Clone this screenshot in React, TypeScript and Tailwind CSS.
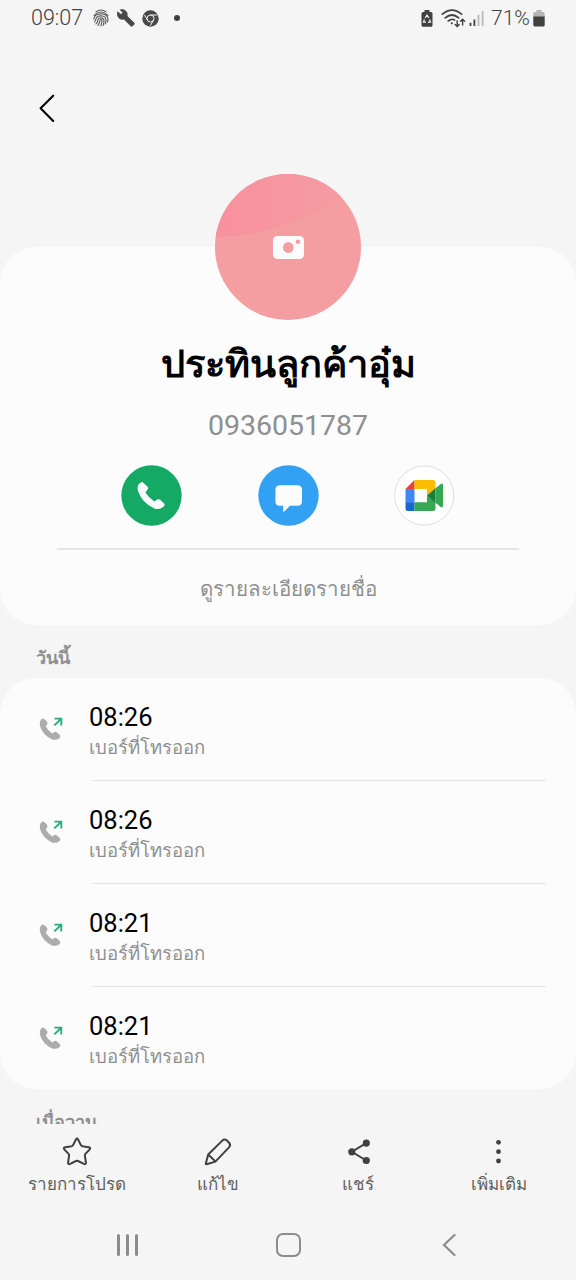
interface Call {
  id: number;
  time: string;
  label: string;
}

interface ToolbarItem {
  title: string;
  icon: React.ReactNode;
}

const calls: Call[] = [
  { id: 1, time: "08:26", label: "เบอร์ที่โทรออก" },
  { id: 2, time: "08:26", label: "เบอร์ที่โทรออก" },
  { id: 3, time: "08:21", label: "เบอร์ที่โทรออก" },
  { id: 4, time: "08:21", label: "เบอร์ที่โทรออก" },
];

const toolbar: ToolbarItem[] = [
  { title: "รายการโปรด", icon: <StarIcon /> },
  { title: "แก้ไข", icon: <PencilIcon /> },
  { title: "แชร์", icon: <ShareIcon /> },
  { title: "เพิ่มเติม", icon: <MoreIcon /> },
];

function StarIcon() {
  return (
    <svg width="32" height="32" viewBox="0 0 32 32" fill="none" stroke="#404040" strokeWidth="2" strokeLinejoin="round">
      <path d="M14.9 3.5Q16 1.7 17.1 3.5L19.9 9.1Q20.4 10 21.4 10.2L27.7 11.2Q30.2 11.8 28.5 13.6L24.4 17.9Q23.8 18.6 23.9 19.6L24.9 26.5Q25 28.8 22.9 27.9L17 25Q16 24.5 15 25L9.1 27.9Q7 28.8 7.1 26.5L8.1 19.6Q8.2 18.6 7.6 17.9L3.5 13.6Q1.8 11.8 4.3 11.2L10.6 10.2Q11.6 10 12.1 9.1Z" />
    </svg>
  );
}

function PencilIcon() {
  return (
    <svg width="32" height="32" viewBox="0 0 32 32" fill="none" stroke="#404040" strokeWidth="2" strokeLinejoin="round">
      <path d="M6.2 18.5L20.3 4.6Q22.5 2.6 24.8 4.4L27.3 7Q29.1 9.2 27 11.4L13.4 25.6L4.6 28.2Q3.6 28.4 3.8 27.4Z" />
      <path d="M6.2 18.5L13.6 25.6" />
    </svg>
  );
}

function ShareIcon() {
  return (
    <svg width="32" height="32" viewBox="0 0 32 32" fill="#404040" stroke="#404040">
      <path d="M24.3 7.1L9.8 15.8L24.3 24.5" fill="none" strokeWidth="1.9" />
      <circle cx="24.3" cy="7.1" r="3.6" stroke="none" />
      <circle cx="9.8" cy="15.8" r="3.6" stroke="none" />
      <circle cx="24.3" cy="24.5" r="3.6" stroke="none" />
    </svg>
  );
}

function MoreIcon() {
  return (
    <svg width="32" height="32" viewBox="0 0 32 32" fill="#404040">
      <circle cx="15.5" cy="6.3" r="2.4" />
      <circle cx="15.5" cy="15.7" r="2.4" />
      <circle cx="15.5" cy="25" r="2.4" />
    </svg>
  );
}

function FingerprintIcon() {
  return (
    <svg width="16" height="18" viewBox="0 0 16 18" fill="none" stroke="#555" strokeWidth="1.1" strokeLinecap="round">
      <path d="M3 2.9Q8 -.8 13 2.9M1 6.4Q8 -.4 15 6.4" />
      <path d="M.9 10.3Q1.2 5 8 4.8Q14.8 5 15 10.5Q15 12 14.4 13" />
      <path d="M1.6 13Q2.8 11.5 3 9.8Q3.8 6.8 8 6.8Q12.8 7 13 11Q12.9 13.5 12.4 15" />
      <path d="M3 15Q5 12.5 5 10.5Q5.4 8.8 8 8.8Q10.8 9 11 11.5Q11 14.2 10.2 16.4" />
      <path d="M5 16.5Q7 13.5 7 11Q8 10 9 11.2Q9 14.5 7.8 17" />
    </svg>
  );
}

function WrenchIcon() {
  return (
    <svg width="18" height="18" viewBox="0 0 18 18" fill="#484848" stroke="#484848" strokeWidth="0.8" strokeLinejoin="round">
      <path d="M.8 2.8L3.9 5.6L5.9 3.6L3.2 .8Q6.4 -.2 8.8 2Q10.9 4.3 10 7L17 13.8Q17.6 14.6 17 15.4L15.3 17.1Q14.6 17.7 13.8 17L6.9 10.1Q3.8 11 1.7 8.8Q-.3 6.2 .8 2.8Z" />
    </svg>
  );
}

function ChromeIcon() {
  return (
    <svg width="17" height="17" viewBox="0 0 17 17" fill="none">
      <circle cx="8.5" cy="8.5" r="8.2" fill="#484848" />
      <circle cx="8.5" cy="8.5" r="3.5" stroke="#f5f5f5" strokeWidth="1" />
      <path d="M8.5 5H15.2M5.4 10.1L2.4 4.9M11.5 10.1L8.4 15.6" stroke="#f5f5f5" strokeWidth="1" />
    </svg>
  );
}

function BatterySaverIcon() {
  return (
    <svg width="12" height="17" viewBox="0 0 12 17">
      <path d="M3.5 0H8.5V2H10Q11.5 2 11.5 3.5V15.2Q11.5 16.7 10 16.7H2Q.5 16.7 .5 15.2V3.5Q.5 2 2 2H3.5Z" fill="#404040" />
      <path d="M4.1 8L6 5.1L7.9 8M8.6 9.4L9.5 12.2H7M5 12.2H2.5L3.4 9.4" fill="none" stroke="#f5f5f5" strokeWidth="1.2" />
    </svg>
  );
}

function WifiIcon() {
  return (
    <svg width="25" height="19" viewBox="0 0 25 19" fill="none" stroke="#404040" strokeLinecap="round">
      <path d="M1.3 5.2Q11 -2.9 20.6 5.2" strokeWidth="1.7" />
      <path d="M4.2 8.9Q11 3.1 17.7 8.9" strokeWidth="1.7" />
      <path d="M7.2 12Q11 9 13.6 11" strokeWidth="1.6" />
      <circle cx="10.8" cy="14.3" r="1.1" fill="#404040" stroke="none" />
      <path d="M16.2 11.8V17M14.2 15.4L16.2 17.4L18.2 15.4M21.6 16V10.5M19.6 12.3L21.6 10.3L23.6 12.3" strokeWidth="1.4" />
    </svg>
  );
}

function SignalIcon() {
  return (
    <svg width="16" height="17" viewBox="0 0 16 17">
      <path d="M.6 12.8H2.4V16H.6ZM4.5 9.4H6.3V16H4.5Z" fill="#404040" />
      <path d="M8.6 4.8H10.4V16H8.6ZM12.7 1H14.5V16H12.7Z" fill="#b9b9b9" />
    </svg>
  );
}

function BatteryIcon() {
  return (
    <svg width="12" height="17" viewBox="0 0 12 17">
      <path d="M3.5 0H8.5V2H10Q11.7 2 11.7 3.7V7H.3V3.7Q.3 2 2 2H3.5Z" fill="#b5b5b5" />
      <path d="M.3 6.5H11.7V15Q11.7 16.6 10 16.6H2Q.3 16.6 .3 15Z" fill="#404040" />
    </svg>
  );
}

function StatusBar() {
  return (
    <div className="flex h-9 shrink-0 items-center pl-[31px] pr-[31px] text-[#404040]">
      <span className="w-[62px] whitespace-nowrap text-[21.5px] font-light leading-9">09:07</span>
      <FingerprintIcon />
      <span className="ml-2">
        <WrenchIcon />
      </span>
      <span className="ml-[7px]">
        <ChromeIcon />
      </span>
      <span className="ml-[15px] size-[6px] rounded-full bg-[#404040]" />
      <div className="ml-auto flex items-center">
        <BatterySaverIcon />
        <span className="ml-2">
          <WifiIcon />
        </span>
        <span className="ml-[3px]">
          <SignalIcon />
        </span>
        <span className="ml-[6px] w-[42px] whitespace-nowrap text-[21px] font-light leading-9">71%</span>
        <BatteryIcon />
      </div>
    </div>
  );
}

function Avatar() {
  return (
    <svg className="-mt-[73px] shrink-0" width="146" height="146" viewBox="0 0 146 146">
      <defs>
        <clipPath id="avatar">
          <circle cx="73" cy="73" r="73" />
        </clipPath>
        <linearGradient id="shade" x1="0" x2="1" y1="0" y2="0">
          <stop offset="0.1" stopColor="#f8919e" />
          <stop offset="0.9" stopColor="#f59ba1" />
        </linearGradient>
      </defs>
      <g clipPath="url(#avatar)">
        <rect width="146" height="146" fill="#f49ea2" />
        <path d="M0 63.5Q72 60 130 22V0H0Z" fill="url(#shade)" />
      </g>
      <rect x="58" y="62" width="31" height="23" rx="4.5" fill="#fcfcfc" />
      <circle cx="73.3" cy="73.5" r="5.4" fill="#f49ea2" />
      <circle cx="83" cy="67.8" r="2.2" fill="#f49ea2" />
    </svg>
  );
}

function ContactActions() {
  return (
    <div className="mt-[19px] flex gap-[75.5px]">
      <button className="size-[61px]">
        <svg width="61" height="61" viewBox="0 0 61 61">
          <circle cx="30.5" cy="30.5" r="30.2" fill="#15a966" />
          <path d="M17.4 19.6Q19.6 16.8 21.4 17L26.4 21.4Q27.8 23 26.6 24.6L24.4 27.4Q27.5 32.6 33.4 36.6L36 34.6Q37.6 33.6 39.2 34.8L43.1 38.4Q44.3 39.8 42.8 41.4Q38.5 45.2 33.4 43.4Q20.6 37.6 16.8 25.4Q16.1 22 17.4 19.6Z" fill="#fcfcfc" />
        </svg>
      </button>
      <button className="size-[61px]">
        <svg width="61" height="61" viewBox="0 0 61 61">
          <circle cx="30.5" cy="30.5" r="30.2" fill="#32a1f3" />
          <path d="M22 20.3H39.5Q44 20.3 44 24.8V36.3Q44 40.8 39.5 40.8H32L26.3 46.5Q25.2 47.4 25.2 46V40.8H22Q17.4 40.8 17.4 36.3V24.8Q17.4 20.3 22 20.3Z" fill="#fcfcfc" />
        </svg>
      </button>
      <button className="size-[61px]">
        <svg width="61" height="61" viewBox="0 0 61 61">
          <circle cx="30.2" cy="30.5" r="29.6" fill="#fff" stroke="#dedede" />
          <path d="M20.5 15L11.5 24H20.5Z" fill="#e94335" />
          <path d="M11.5 24H20.5V37.5H11.5Z" fill="#4285f4" />
          <path d="M11.5 37.2H20.5V46H14Q11.5 46 11.5 43.5Z" fill="#1967d2" />
          <path d="M20.5 15H39Q41.5 15 41.5 17.5V24L33 30.5V24H20.5Z" fill="#fbbc04" />
          <path d="M20.5 37.2H33V30.5L41.5 37V43.5Q41.5 46 39 46H20.5Z" fill="#34a853" />
          <path d="M33 30.5L41.5 23.2V37.8Z" fill="#188038" />
          <path d="M41.5 23.2L46.8 19Q49 17.8 49 20V41Q49 43.2 46.8 42L41.5 37.8Z" fill="#34a853" />
        </svg>
      </button>
    </div>
  );
}

function CallRow({ call, last }: { call: Call; last: boolean }) {
  return (
    <div className="flex h-[103.1px] shrink-0 pl-[39px]">
      <svg className="mt-[39px] shrink-0" width="25" height="25" viewBox="0 0 25 25">
        <path d="M1.3 3.7Q2.9 1 4.6 1.5L7.9 4.6Q9 6 8.1 7.4L6.8 9.4Q9 13.6 13.3 16.5L15.4 15.1Q16.8 14.3 18 15.4L20.8 18Q22 19.4 20.6 20.9Q17.3 23.7 13 22.4Q3.8 18.4 1 9.1Q.3 6 1.3 3.7Z" fill="#acacac" />
        <path d="M15.3 8.4L22 2M15.4 1.6H22.3V8.5" fill="none" stroke="#2aad7c" strokeWidth="1.9" />
      </svg>
      <div className={`ml-[25px] mr-[30px] flex-1 ${last ? "" : "bg-[linear-gradient(#e5e5e5,#e5e5e5)] bg-[length:454px_1px] bg-no-repeat bg-[position:right_bottom]"}`}>
        <div className="mt-[22px] h-[34px] whitespace-nowrap text-[25.5px] leading-[34px] text-black">{call.time}</div>
        <div className="h-[28px] whitespace-nowrap text-[18.5px] leading-[28px] text-[#8f8f8f]">{call.label}</div>
      </div>
    </div>
  );
}

export default function App() {
  return (
    <div className="flex h-[1280px] w-[576px] flex-col overflow-hidden bg-[#f5f5f5] font-[Roboto,'Liberation_Sans',sans-serif]">
      <StatusBar />

      <header className="h-[211px] shrink-0 pl-[38px] pt-[57px]">
        <svg width="18" height="30" viewBox="0 0 18 30" fill="none" stroke="#000" strokeWidth="2.1" strokeLinecap="round" strokeLinejoin="round">
          <path d="M15.2 2.7L2.6 15.3L15.2 28" />
        </svg>
      </header>

      <section className="flex h-[378px] shrink-0 flex-col items-center rounded-[36px] bg-[#fcfcfc]">
        <Avatar />
        <h1 className="mt-5 h-[48px] whitespace-nowrap text-[38px] font-bold leading-[48px] text-black">ประทินลูกค้าอุ๋ม</h1>
        <p className="mt-[18px] h-10 whitespace-nowrap text-[28.5px] leading-10 text-[#8f8f8f]">0936051787</p>
        <ContactActions />
        <div className="mt-[22px] h-[2px] w-[462px] shrink-0 bg-[#e4e4e4]" />
        <p className="mt-[24px] h-[30px] whitespace-nowrap text-[20.5px] leading-[30px] text-[#8f8f8f]">ดูรายละเอียดรายชื่อ</p>
      </section>

      <h2 className="h-[53px] shrink-0 whitespace-nowrap pl-9 pt-[18px] text-[18px] font-bold leading-[30px] text-[#8f8f8f]">วันนี้</h2>

      <section className="flex h-[411px] shrink-0 flex-col rounded-[36px] bg-[#fcfcfc]">
        {calls.map((call, index) => (
          <CallRow key={call.id} call={call} last={index === calls.length - 1} />
        ))}
      </section>

      <h2 className="h-[35px] shrink-0 overflow-hidden whitespace-nowrap pl-9 pt-[18px] text-[18px] font-bold leading-[30px] text-[#8f8f8f]">เมื่อวาน</h2>

      <nav className="flex h-[86px] shrink-0 px-[7px]">
        {toolbar.map((item) => (
          <button key={item.title} className="flex flex-1 flex-col items-center pt-3">
            {item.icon}
            <span className="mt-[2px] h-[28px] whitespace-nowrap text-[17px] leading-[28px] text-[#606060]">{item.title}</span>
          </button>
        ))}
      </nav>

      <div className="flex h-[70px] shrink-0 justify-center">
        <div className="flex w-[161px] items-center justify-center gap-[6px]">
          <span className="h-[22px] w-[3px] rounded-full bg-[#8c8c8c]" />
          <span className="h-[22px] w-[3px] rounded-full bg-[#8c8c8c]" />
          <span className="h-[22px] w-[3px] rounded-full bg-[#8c8c8c]" />
        </div>
        <div className="flex w-[161px] items-center justify-center">
          <span className="h-[24px] w-[25px] rounded-[7px] border-2 border-[#8c8c8c]" />
        </div>
        <div className="flex w-[161px] items-center justify-center">
          <svg width="14" height="24" viewBox="0 0 14 24" fill="none" stroke="#8c8c8c" strokeWidth="2.2" strokeLinecap="round">
            <path d="M12.5 2L2 12L12.5 22" />
          </svg>
        </div>
      </div>
    </div>
  );
}
